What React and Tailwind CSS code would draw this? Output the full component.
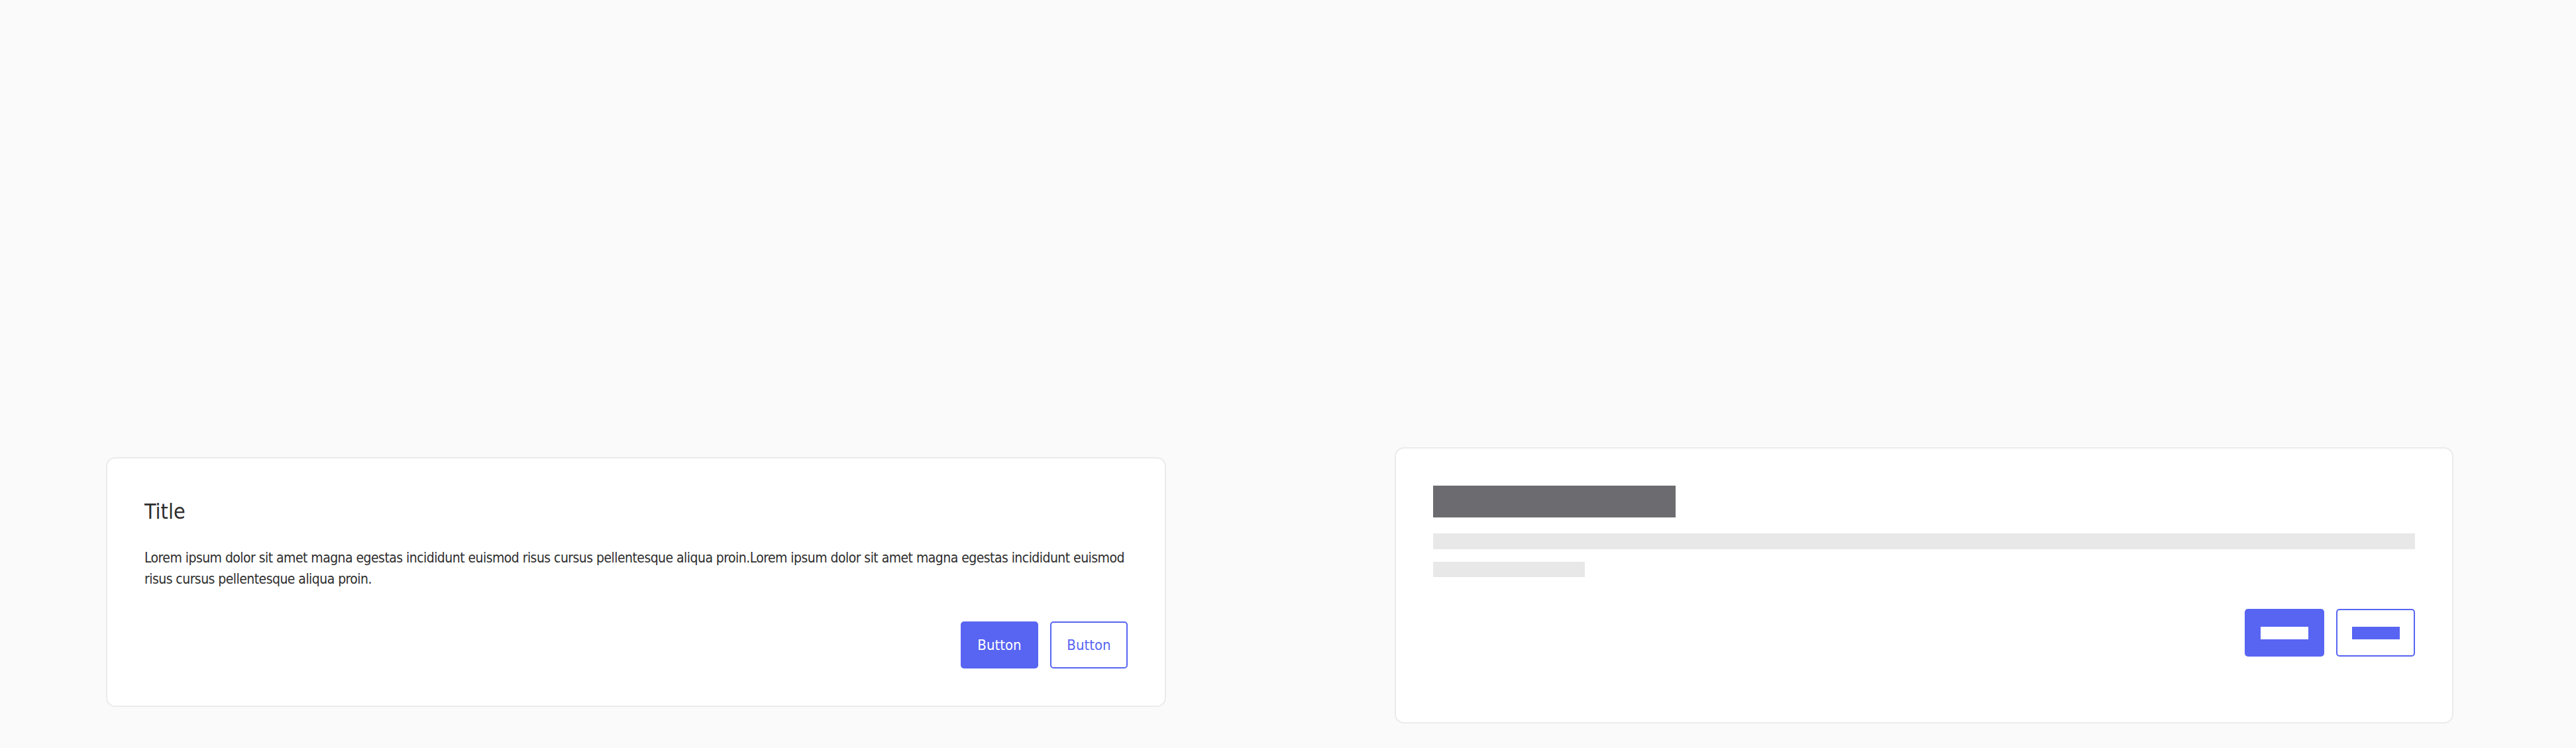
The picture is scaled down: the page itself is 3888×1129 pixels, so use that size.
export default function App() {
  const font = { fontFamily: '"Liberation Sans Narrow", "DejaVu Sans Condensed", "Liberation Sans", sans-serif' };
  return (
    <div className="min-h-[1129px] w-full bg-[#fafafa]" style={font}>
      <div className="grid grid-cols-2 items-start pt-[675px]">
        <div className="pl-[160px] pt-[15px]">
          <div className="w-[1600px] rounded-[14px] border-2 border-[#ebebeb] bg-white p-[56px]">
            <h2 className="text-[32px] leading-[48px] text-[#2e2e2e]">Title</h2>
            <p className="mt-[30px] whitespace-nowrap text-[21px] leading-[32px] tracking-[-0.55px] text-[#2e2e2e]">
              Lorem ipsum dolor sit amet magna egestas incididunt euismod risus cursus pellentesque aliqua proin.Lorem ipsum dolor sit amet magna egestas incididunt euismod
              <br />
              risus cursus pellentesque aliqua proin.
            </p>
            <div className="mt-[48px] flex justify-end gap-[18px]">
              <button className="flex h-[71px] w-[117px] items-center justify-center rounded-[5px] bg-[#5865f2] text-[22px] text-white">
                Button
              </button>
              <button className="flex h-[71px] w-[117px] items-center justify-center rounded-[5px] border-2 border-[#5865f2] bg-white text-[22px] text-[#5865f2]">
                Button
              </button>
            </div>
          </div>
        </div>
        <div className="pl-[161px]">
          <div className="w-[1598px] rounded-[14px] border-2 border-[#ebebeb] bg-white px-[56px] pb-[99px] pt-[56px]">
            <div className="h-[48px] w-[366px] bg-[#6c6b6f]" />
            <div className="mt-[24px] h-[24px] w-full bg-[#e8e8e8]" />
            <div className="mt-[19px] h-[23px] w-[229px] bg-[#e8e8e8]" />
            <div className="mt-[48px] flex justify-end gap-[18px]">
              <div className="flex h-[72px] w-[120px] items-center justify-center rounded-[5px] bg-[#5865f2]">
                <div className="h-[19px] w-[72px] bg-white" />
              </div>
              <div className="flex h-[72px] w-[119px] items-center justify-center rounded-[5px] border-2 border-[#5865f2] bg-white">
                <div className="h-[19px] w-[72px] bg-[#5865f2]" />
              </div>
            </div>
          </div>
        </div>
      </div>
    </div>
  );
}
